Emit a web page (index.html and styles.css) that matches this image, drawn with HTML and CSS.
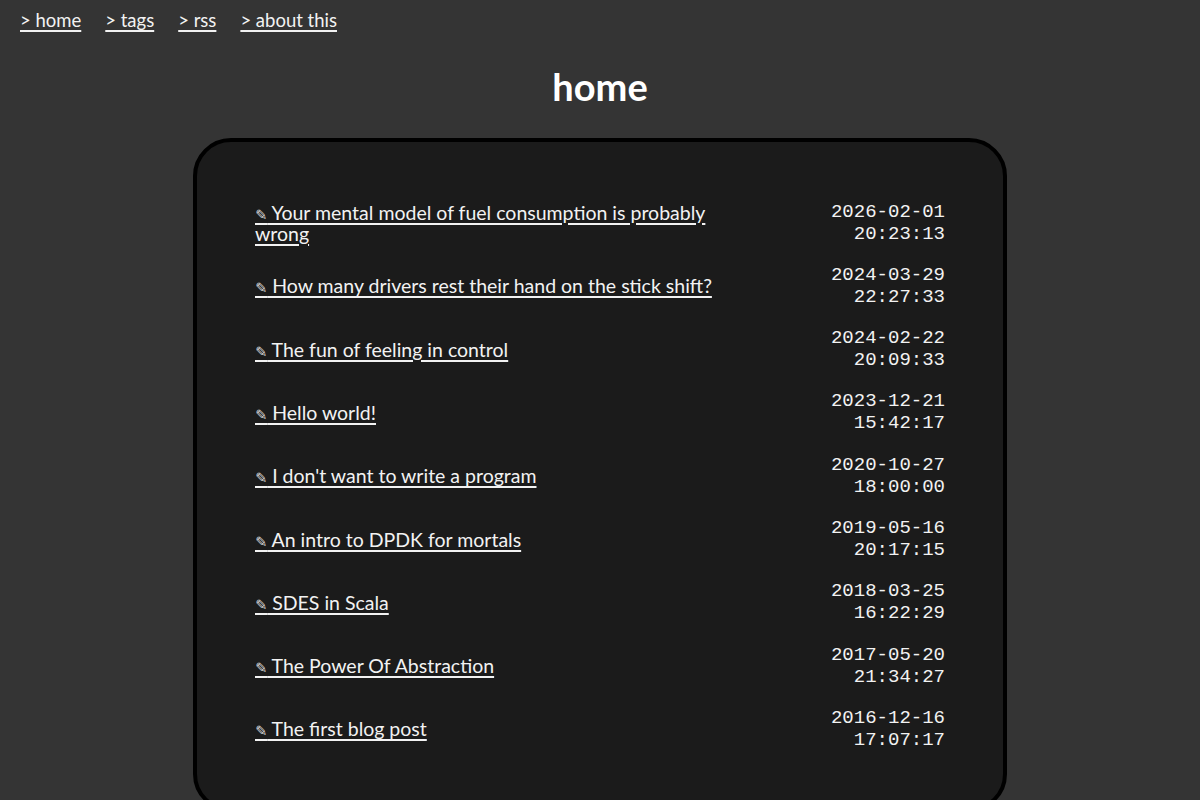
FILE: index.html
```html
<!DOCTYPE html>
<html lang="en">
<head>
<meta charset="utf-8">
<title>home</title>
<link rel="stylesheet" href="styles.css">
</head>
<body>
<nav class="nav">
  <a href="#">&gt; home</a>
  <a href="#">&gt; tags</a>
  <a href="#">&gt; rss</a>
  <a href="#">&gt; about this</a>
</nav>
<h1 class="title">home</h1>
<main class="card">
  <div class="posts">
    <a class="post" href="#"><span class="pen">✎&#xFE0E;</span> Your mental model of fuel consumption is probably wrong</a>
    <div class="date">2026-02-01<br>20:23:13</div>
    <a class="post" href="#"><span class="pen">✎&#xFE0E;</span> How many drivers rest their hand on the stick shift?</a>
    <div class="date">2024-03-29<br>22:27:33</div>
    <a class="post" href="#"><span class="pen">✎&#xFE0E;</span> The fun of feeling in control</a>
    <div class="date">2024-02-22<br>20:09:33</div>
    <a class="post" href="#"><span class="pen">✎&#xFE0E;</span> Hello world!</a>
    <div class="date">2023-12-21<br>15:42:17</div>
    <a class="post" href="#"><span class="pen">✎&#xFE0E;</span> I don't want to write a program</a>
    <div class="date">2020-10-27<br>18:00:00</div>
    <a class="post" href="#"><span class="pen">✎&#xFE0E;</span> An intro to DPDK for mortals</a>
    <div class="date">2019-05-16<br>20:17:15</div>
    <a class="post" href="#"><span class="pen">✎&#xFE0E;</span> SDES in Scala</a>
    <div class="date">2018-03-25<br>16:22:29</div>
    <a class="post" href="#"><span class="pen">✎&#xFE0E;</span> The Power Of Abstraction</a>
    <div class="date">2017-05-20<br>21:34:27</div>
    <a class="post" href="#"><span class="pen">✎&#xFE0E;</span> The first blog post</a>
    <div class="date">2016-12-16<br>17:07:17</div>
  </div>
</main>
</body>
</html>
```

FILE: styles.css
```css
html, body {
  margin: 0;
  padding: 0;
}
body {
  background: #343434;
  color: #f2f2f2;
  font-family: Lato, "Open Sans", sans-serif;
  font-size: 20px;
}
a {
  color: #f2f2f2;
  text-decoration: underline;
  text-underline-offset: 3px;
  text-decoration-thickness: 1.5px;
}
.nav {
  display: flex;
  gap: 24px;
  padding: 8px 20px 0;
  height: 33px;
  line-height: 24px;
  font-size: 18.5px;
}
.title {
  margin: 21px 0 0;
  text-align: center;
  font-size: 38px;
  font-weight: 700;
  line-height: 48px;
  color: #ffffff;
}
.card {
  box-sizing: border-box;
  width: 814px;
  margin: 28px auto 0;
  background: #1b1b1b;
  border: 4px solid #000;
  border-radius: 38px;
  padding: 49px 58px 47px 58px;
}
.posts {
  display: grid;
  grid-template-columns: 480px 1fr;
  align-items: center;
}
.post {
  padding: 10px 0;
  line-height: 21px;
  font-size: 19.5px;
}
.pen {
  font-family: "DejaVu Sans", sans-serif;
  font-size: 14.5px;
  line-height: 0;
  color: #dddddd;
}
.date {
  font-family: "Liberation Mono", monospace;
  font-size: 19px;
  line-height: 22px;
  text-align: right;
  padding: 9.65px 0;
  color: #f2f2f2;
}
```
